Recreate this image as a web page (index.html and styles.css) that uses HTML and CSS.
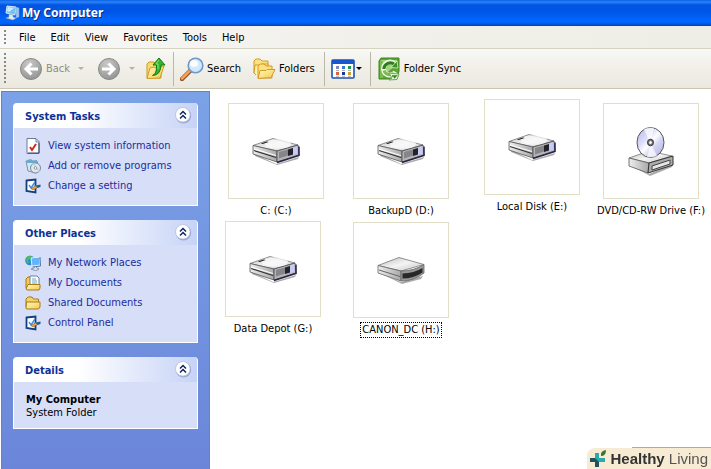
FILE: index.html
```html
<!DOCTYPE html>
<html lang="en">
<head>
<meta charset="utf-8">
<title>My Computer</title>
<link rel="stylesheet" href="styles.css">
</head>
<body>
<svg class="defs" aria-hidden="true">
  <defs>
    <linearGradient id="metal" x1="0" y1="0" x2="1" y2="1"><stop offset="0" stop-color="#bbb"/><stop offset=".5" stop-color="#f4f4f4"/><stop offset="1" stop-color="#c4c4c4"/></linearGradient>
    <linearGradient id="side" x1="0" y1="0" x2="1" y2="0"><stop offset="0" stop-color="#eee"/><stop offset="1" stop-color="#a8a8a8"/></linearGradient>
    <linearGradient id="folderfill" x1="0" y1="0" x2="1" y2="1"><stop offset="0" stop-color="#fffbc0"/><stop offset="1" stop-color="#f4c94e"/></linearGradient>
    <linearGradient id="disc" x1="0" y1="0" x2="1" y2="1"><stop offset="0" stop-color="#b9b9ee"/><stop offset=".35" stop-color="#dcdcfa"/><stop offset=".5" stop-color="#fff"/><stop offset=".65" stop-color="#d4d4f4"/><stop offset="1" stop-color="#b0b0e0"/></linearGradient>
    <radialGradient id="round" cx=".4" cy=".25" r=".8"><stop offset="0" stop-color="#c9c9c7"/><stop offset="1" stop-color="#929292"/></radialGradient>
    <symbol id="drive" viewBox="0 0 48 28">
      <path d="M3 17 24 27 47 20 46 22 25 28 3 19Z" fill="#aaa"/>
      <path d="M1 8.500 21 1.500 46 8 25 14Z" fill="url(#metal)" stroke="#666" stroke-width=".7"/>
      <path d="M1 8.500 25 14V25L1 17Z" fill="url(#side)" stroke="#555" stroke-width=".8"/>
      <path d="M25 14 46 8 47 18 25 25Z" fill="#b5b5b5" stroke="#44444e" stroke-width=".8"/>
      <path d="M2 13.500 24 20.500" stroke="#333" stroke-width="1.200"/>
      <path d="M2 12 24 18.500" stroke="#fff" stroke-width="1"/>
      <ellipse cx="26" cy="7" rx="13" ry="4.800" fill="#fafafa" opacity=".75"/>
      <path d="m9 6.500 6-2 1.500.5-6 2Z" fill="#111"/>
      <path d="m27 15 9-2.500v6L27 21.500Z" fill="#85858a"/>
      <path d="m36 12.500 5-1.500v6.500l-5 1.500Z" fill="#22222c"/>
      <path d="m41 10.500 4.500-1.500v8L41 18Z" fill="#cacaf7"/>
      <path d="m25 25.500 22-7V9.500" fill="none" stroke="#252548" stroke-width="1.500"/>
    </symbol>
    <symbol id="removable" viewBox="0 0 48 28">
      <path d="M3 17 24 26 46 20 44 23 25 28Z" fill="#aaa"/>
      <path d="M1 9.500 22 1.500 47 8.500 24 15Z" fill="url(#metal)" stroke="#777" stroke-width=".8"/>
      <path d="M1 9.500 24 15V25L1 17Z" fill="url(#side)" stroke="#666" stroke-width=".8"/>
      <path d="M24 15Q37 15 47 8.500V17Q37 25 24 25Z" fill="#999" stroke="#666" stroke-width=".8"/>
      <path d="M25.500 17.500Q37 17 45.500 12V16.500Q37 22.500 25.500 22.500Z" fill="#282828"/>
      <path d="m2 14 21 6.500" stroke="#666"/>
    </symbol>
    <symbol id="optical" viewBox="0 0 48 50">
      <path d="M5 40 22 48 46 38 45 41 23 50Z" fill="#aaa"/>
      <path d="M2 32 22 25 45 30 22 37Z" fill="url(#metal)" stroke="#777" stroke-width=".8"/>
      <path d="M2 32 22 37 21 47 2 40Z" fill="url(#side)" stroke="#555" stroke-width=".8"/>
      <path d="M22 37 46 30V39L21 47Z" fill="#aaa" stroke="#333"/>
      <path d="m25 40 18-6v4l-18 6Z" fill="#e5e5e5" stroke="#444"/>
      <ellipse cx="23.500" cy="16.500" rx="13.500" ry="15" fill="url(#disc)" stroke="#555"/>
      <path d="M23 17 17 3Q22 1 27 2ZM24 18 30 30Q25 32 20 31Z" fill="#fff" opacity=".7"/>
      <ellipse cx="23.500" cy="16.500" rx="3" ry="3.300" fill="#777" stroke="#333"/>
      <ellipse cx="23.500" cy="16.500" rx="1.300" ry="1.500" fill="#fff"/>
    </symbol>
    <symbol id="folder" viewBox="0 0 16 16">
      <path d="M1 12V4L3 2H7L8.500 4H13.500V7" fill="#f5d464" stroke="#a87917"/>
      <path d="M1 13.500 1.500 7H15V12L13.500 14H2Z" fill="url(#folderfill)" stroke="#a87917"/>
    </symbol>
    <symbol id="panel" viewBox="0 0 16 16">
      <path d="M1.500 2.500 10.500 1.500V14.500L1.500 13Z" fill="#fff" stroke="#123f7c" stroke-width="1.800"/>
      <path d="m4 7 2 3 4-6" fill="none" stroke="#388de4" stroke-width="1.400"/>
      <path d="M6 10.500 11 7.500 12.500 9.500 8 12Z" fill="#e4a850" stroke="#835020" stroke-width=".6"/>
      <path d="m11 7.500 4.500-1v2.500l-3 1Z" fill="#255a90"/>
    </symbol>
    <symbol id="chevrons" viewBox="0 0 18 18">
      <circle cx="9.500" cy="9.800" r="7.700" fill="#9aa8cf"/>
      <circle cx="8.800" cy="8.800" r="7.300" fill="#fff" stroke="#b5bedb" stroke-width=".8"/>
      <path d="m6 8.500 3-3 3 3M6 12.500l3-3 3 3" fill="none" stroke="#10255e" stroke-width="1.500"/>
    </symbol>
  </defs>
</svg>

<div class="window">
  <header class="titlebar">
    <svg class="i16" viewBox="0 0 16 16" aria-hidden="true">
      <path d="m3 1 9 1-1 8-9-2Z" fill="#75bdf8" stroke="#dceafa"/>
      <path d="m4 2 6 1-5 4-2-1Z" fill="#c7eeff"/>
      <path d="m12 2 3 1v9l-3 1Z" fill="#9bc8ec" stroke="#6ba0dc" stroke-width=".6"/>
      <path d="m5 9 4 1v2l3 1-3 2-7-2 3-1Z" fill="#e4e9ef" stroke="#8aa" stroke-width=".6"/>
    </svg>
    <h1>My Computer</h1>
  </header>

  <nav class="menubar grip" aria-label="Menu">
    <button>File</button><button>Edit</button><button>View</button><button>Favorites</button><button>Tools</button><button>Help</button>
  </nav>

  <div class="toolbar grip" role="toolbar" aria-label="Standard buttons">
    <div class="group history">
      <button class="tool muted" disabled>
        <svg class="i24" viewBox="0 0 24 24" aria-hidden="true"><circle cx="12" cy="12" r="10.500" fill="url(#round)" stroke="#888"/><path d="M12.500 6.500 7 12l5.500 5.500M7.500 12H19" fill="none" stroke="#fff" stroke-width="3"/></svg>
        <span>Back</span>
      </button>
      <button class="drop muted" aria-label="Back history" disabled></button>
      <button class="tool forward" aria-label="Forward" disabled>
        <svg class="i24" viewBox="0 0 24 24" aria-hidden="true"><circle cx="12" cy="12" r="10.500" fill="url(#round)" stroke="#888"/><path d="M11.500 6.500 17 12l-5.500 5.500M16.500 12H5" fill="none" stroke="#fff" stroke-width="3"/></svg>
      </button>
      <button class="drop muted" aria-label="Forward history" disabled></button>
      <button class="tool" aria-label="Up">
        <svg class="i24" viewBox="0 0 24 24" aria-hidden="true">
          <path d="M4 21V7l2-2h5l1 2h6v14Z" fill="#f8da70" stroke="#cf9b20"/>
          <path d="M4 21.500 7 11l4-1 2 1 8-2-4 12Z" fill="url(#folderfill)" stroke="#cf9b20"/>
          <path d="M9.500 18.500Q14 17 13.500 8H10L16 1 22 8H18Q18 18 9.500 18.500Z" fill="#32b52f" stroke="#147b17"/>
          <path d="m16 3-3 4h2v5" fill="none" stroke="#8ee671"/>
        </svg>
      </button>
    </div>
    <div class="group explore">
      <button class="tool">
        <svg class="i24" viewBox="0 0 24 24" aria-hidden="true">
          <path d="m2 22 8-8" stroke="#934f24" stroke-width="4.500" stroke-linecap="round"/><path d="m2 21.500 8-8" stroke="#f2a35d" stroke-width="2.500" stroke-linecap="round"/>
          <circle cx="15.500" cy="8.500" r="7.300" fill="#cfeaff" stroke="#7398c8" stroke-width="1.600"/><ellipse cx="14" cy="6.500" rx="4" ry="3.500" fill="#fff" opacity=".9"/>
        </svg>
        <span>Search</span>
      </button>
      <button class="tool">
        <svg class="i24" viewBox="0 0 24 24" aria-hidden="true">
          <path d="M2 16V4l2-2h4l2 2h6v12Z" fill="#fbe180" stroke="#d49a28"/>
          <path d="m4 18-2-2 1-8h6l1-1h6v6" fill="#fff1a4" stroke="#d49a28"/>
          <path d="M6 21V9l2-2h4l2 2h6v12Z" fill="#fbe180" stroke="#d49a28"/>
          <path d="m6 21.500 2-8h6l1-1h8l-4 8Z" fill="url(#folderfill)" stroke="#d49a28"/>
        </svg>
        <span>Folders</span>
      </button>
    </div>
    <div class="group views">
      <button class="tool" aria-label="Views">
        <svg class="i24" viewBox="0 0 24 24" aria-hidden="true">
          <rect x="1" y="3" width="22" height="18" rx="1" fill="#fff" stroke="#1c51b5" stroke-width="1.600"/><path d="M1 3h22v4H1Z" fill="#1956cc"/>
          <path d="M5 9h3v3H5Z" fill="#8d83b7"/><path d="M11 9h3v3h-3Z" fill="#377bd4"/><path d="M17 9h3v3h-3Z" fill="#209748"/>
          <path d="M5 15h3v3H5Z" fill="#df613f"/><path d="M11 15h3v3h-3Z" fill="#193b91"/><path d="M17 15h3v3h-3Z" fill="#c5a13b"/>
          <path d="M5 13.500h3m3 0h3m3 0h3M5 19.300h3m3 0h3m3 0h3" stroke="#999" stroke-width=".8"/>
        </svg>
      </button>
      <button class="drop" aria-label="Choose view"></button>
    </div>
    <div class="group">
      <button class="tool">
        <svg class="i24" viewBox="0 0 24 24" aria-hidden="true">
          <path d="M4 1h18v13l-2 8H2V4Z" fill="#5fa336" stroke="#3c861f"/>
          <path d="M4 3h16v4L5 20H3V5Z" fill="#a5d27c"/>
          <path d="M3 4h3v17H3Z" fill="#7dbb50"/>
          <path d="M18 7.500A6.500 6.500 0 1 0 18.500 15" fill="none" stroke="#eff8e7" stroke-width="5"/>
          <path d="M17.500 7.500A6.500 6.500 0 0 0 6.800 12" fill="none" stroke="#2e7d1c" stroke-width="3"/>
          <path d="M7 13.500A6.500 6.500 0 0 0 17 16.500" fill="none" stroke="#7cba52" stroke-width="3"/>
          <path d="M14 10.500 21 11 20 4Z" fill="#3c8e26" stroke="#e8f7dc" stroke-width=".7"/>
          <path d="m12 16 10 1-2 5.500-8 .5 3-2Z" fill="#e1f3d4" stroke="#599f3d" stroke-width=".8"/>
          <path d="m15 19 4 0-2 2" fill="none" stroke="#34841e" stroke-width="1.500"/>
        </svg>
        <span>Folder Sync</span>
      </button>
    </div>
  </div>

  <div class="content">
    <aside class="sidebar">
      <section class="card">
        <header><h2>System Tasks</h2><button aria-label="Collapse System Tasks"><svg class="i18" aria-hidden="true"><use href="#chevrons"/></svg></button></header>
        <ul>
          <li><a href="#"><svg class="i16" viewBox="0 0 16 16" aria-hidden="true"><path d="M2 .5h9l3 3v12H2Z" fill="#fff" stroke="#68799d"/><path d="M11 1v3h3" fill="none" stroke="#68799d"/><path d="M14 5v10H3" fill="none" stroke="#334668"/><path d="m5 9 2 3 4-6" fill="none" stroke="#d7261e" stroke-width="2"/></svg>View system information</a></li>
          <li><a href="#"><svg class="i16" viewBox="0 0 16 16" aria-hidden="true"><path d="M1 3h11l1 5-2 7-8-2Z" fill="#d3e8ef" stroke="#7293ab"/><path d="m2 2 4-1 2 2 4-1v3H2Z" fill="#6aa9d3"/><circle cx="10.500" cy="10" r="5" fill="#e4e4f4" stroke="#7985a8"/><path d="m10 9-3-3 3-1 1 4 4 3-2 2Z" fill="#b6e3bf"/><circle cx="10.500" cy="10" r="1.300" fill="#fff" stroke="#777" stroke-width=".7"/></svg>Add or remove programs</a></li>
          <li><a href="#"><svg class="i16" aria-hidden="true"><use href="#panel"/></svg>Change a setting</a></li>
        </ul>
      </section>
      <section class="card">
        <header><h2>Other Places</h2><button aria-label="Collapse Other Places"><svg class="i18" aria-hidden="true"><use href="#chevrons"/></svg></button></header>
        <ul>
          <li><a href="#"><svg class="i16" viewBox="0 0 16 16" aria-hidden="true"><circle cx="5" cy="5.500" r="4.800" fill="#2a8cd2"/><path d="M1 4Q3 0 7 1L5 4 3 5 4 8 2 8Z" fill="#51bd59"/><path d="m6 3 9-1v8l-8 1Z" fill="#62b4fb" stroke="#e2edfa"/><path d="m15 2 .5 9-8 1" fill="none" stroke="#53779f"/><path d="m10 11 2 2 2 1-3 2-5-2 3-1Z" fill="#d4dcea" stroke="#6d7d9c" stroke-width=".7"/></svg>My Network Places</a></li>
          <li><a href="#"><svg class="i16" viewBox="0 0 16 16" aria-hidden="true"><path d="M1 13V4l2-2h3v12Z" fill="#f3cb52" stroke="#a87917"/><path d="M5 1h7l2 2v9H5Z" fill="#fff" stroke="#67839e"/><path d="M7 4h4M7 6h5M7 8h5" stroke="#6fa3c1"/><path d="M1 14 3 9.500h12V13l-1 2H2Z" fill="url(#folderfill)" stroke="#a87917"/></svg>My Documents</a></li>
          <li><a href="#"><svg class="i16" aria-hidden="true"><use href="#folder"/></svg>Shared Documents</a></li>
          <li><a href="#"><svg class="i16" aria-hidden="true"><use href="#panel"/></svg>Control Panel</a></li>
        </ul>
      </section>
      <section class="card">
        <header><h2>Details</h2><button aria-label="Collapse Details"><svg class="i18" aria-hidden="true"><use href="#chevrons"/></svg></button></header>
        <div class="details"><strong>My Computer</strong><span>System Folder</span></div>
      </section>
    </aside>

    <main class="canvas">
      <figure class="item drive-c"><div class="thumb"><svg class="disk" aria-hidden="true"><use href="#drive"/></svg></div><figcaption>C: (C:)</figcaption></figure>
      <figure class="item drive-d"><div class="thumb"><svg class="disk" aria-hidden="true"><use href="#drive"/></svg></div><figcaption>BackupD (D:)</figcaption></figure>
      <figure class="item drive-e"><div class="thumb"><svg class="disk" aria-hidden="true"><use href="#drive"/></svg></div><figcaption>Local Disk (E:)</figcaption></figure>
      <figure class="item drive-f"><div class="thumb"><svg class="optical" aria-hidden="true"><use href="#optical"/></svg></div><figcaption>DVD/CD-RW Drive (F:)</figcaption></figure>
      <figure class="item drive-g"><div class="thumb"><svg class="disk" aria-hidden="true"><use href="#drive"/></svg></div><figcaption>Data Depot (G:)</figcaption></figure>
      <figure class="item drive-h"><div class="thumb"><svg class="disk" aria-hidden="true"><use href="#removable"/></svg></div><figcaption class="focused">CANON_DC (H:)</figcaption></figure>
    </main>
  </div>
</div>

<div class="brand">
  <svg class="i18" viewBox="0 0 18 18" aria-hidden="true"><path d="M6 3h4v5h6v4h-6v5H6v-5H1V8h5Z" fill="#2baaa9"/><path d="M1 8h5l4 4v5H6v-5H1Z" fill="#22535c"/><path d="M12 6q-1-5 5-6 0 6-5 6Z" fill="#397536"/></svg>
  <span><b>Healthy</b> Living</span>
</div>
</body>
</html>
```
FILE: styles.css
```css
* { box-sizing: border-box; }
body {
  margin: 0;
  font: 11px/14px Tahoma, "DejaVu Sans Condensed", "DejaVu Sans", sans-serif;
  color: #000;
  background: #fff;
}
h1, h2, ul, figure { margin: 0; padding: 0; }
button { margin: 0; padding: 0; border: 0; background: none; font: inherit; color: inherit; }
svg { display: block; flex: none; }
.defs { position: absolute; width: 0; height: 0; }
.i16 { width: 16px; height: 16px; }
.i18 { width: 18px; height: 18px; }
.i24 { width: 24px; height: 24px; }

.window { display: flex; flex-direction: column; min-height: 100vh; }

.titlebar {
  display: flex;
  align-items: center;
  gap: 2px;
  height: 26px;
  padding: 0 4px;
  background: linear-gradient(#0b62e5 0, #2a83fa 2px, #0055e2 5px, #0055e5 12px, #0266ff 20px, #0063f8 23px, #0040b8 26px);
}
.titlebar h1 {
  font: bold 12px/16px "Noto Sans", sans-serif;
  color: #fff;
  text-shadow: 1px 1px #0a2a84;
}

.grip { position: relative; }
.grip::before {
  content: "";
  position: absolute;
  left: 4px;
  top: 4px;
  bottom: 4px;
  width: 2px;
  background: repeating-linear-gradient(#8c8a80 0 2px, transparent 2px 4px);
}
.menubar {
  display: flex;
  align-items: center;
  gap: 15px;
  height: 23px;
  padding: 1px 19px 0;
  background: linear-gradient(90deg, #f8f8f8, #f1f0ea 50%, #efeee6);
  border-bottom: 1px solid #d5d2c2;
}
.toolbar {
  display: flex;
  align-items: center;
  height: 40px;
  padding-left: 19px;
  background: linear-gradient(#f8f8f5, #f0efe8 50%, #ebe9df);
  border-bottom: 1px solid #cbc6b0;
}
.group { display: flex; align-items: center; height: 34px; padding: 0 6px; }
.group + .group { border-left: 1px solid #bbb8a8; }
.history { padding-left: 0; }
.explore { gap: 11px; padding-right: 9px; }
.tool { display: flex; align-items: center; gap: 3px; }
.tool span { padding-top: 1px; }
.forward { margin-left: 5px; }
.drop { width: 22px; height: 24px; display: grid; place-items: center; }
.drop::before { content: ""; border: 3px solid transparent; border-top-color: #000; border-bottom: 0; }
.views .drop { width: 9px; }
.muted { color: #8f8d80; }
.drop.muted::before { border-top-color: #b5b2a5; }

.content { display: flex; flex: 1; padding-top: 2px; padding-left: 1px; }
.sidebar {
  display: flex;
  flex-direction: column;
  gap: 14px;
  width: 209px;
  padding: 11px;
  border: 1px solid #5d82d8;
  border-bottom: 0;
  background: linear-gradient(#7ba2e7, #6b86d9);
}
.card { border: 1px solid #fff; border-top: 0; border-radius: 4px 4px 0 0; background: #d6dff7; }
.card header {
  display: flex;
  align-items: flex-end;
  justify-content: space-between;
  height: 25px;
  padding: 0 5px 4px 11px;
  border-radius: 4px 4px 0 0;
  background: linear-gradient(90deg, #fff 35%, #c6d3f7);
}
.card h2 { font-size: 11px; line-height: 14px; color: #0c3296; }
.card ul { display: grid; gap: 4px; padding: 10px 11px 11px; list-style: none; }
.card a { display: flex; align-items: center; gap: 7px; color: #1d2c9c; text-decoration: none; white-space: nowrap; }
.details { display: flex; flex-direction: column; padding: 11px 12px 9px; line-height: 13px; }

.canvas { position: relative; flex: 1; min-width: 0; }
.item {
  position: absolute;
  display: flex;
  flex-direction: column;
  align-items: center;
  gap: 5px;
  width: 96px;
  white-space: nowrap;
}
.thumb { display: grid; place-items: center; width: 96px; height: 96px; border: 1px solid #e2dfc8; }
.disk { width: 48px; height: 28px; }
.optical { width: 48px; height: 50px; }
.focused { padding: 0 1px; outline: 1px dotted #000; }
.drive-c { left: 18px; top: 12px; }
.drive-d { left: 143px; top: 12px; }
.drive-e { left: 274px; top: 8px; }
.drive-f { left: 393px; top: 12px; }
.drive-g { left: 15px; top: 130px; }
.drive-h { left: 143px; top: 131px; }

.brand {
  position: fixed;
  right: 0;
  bottom: 0;
  display: flex;
  align-items: center;
  gap: 3px;
  height: 21px;
  padding: 0 3px 0 2px;
  border-top-left-radius: 8px;
  background: #f7ebd3;
  font: 15px/20px "Liberation Sans", sans-serif;
  color: #555;
}
.brand::before {
  content: "";
  position: absolute;
  right: 0;
  top: -1px;
  width: 79px;
  height: 1px;
  background: #9db98a;
}
.brand b { color: #333; }
```
